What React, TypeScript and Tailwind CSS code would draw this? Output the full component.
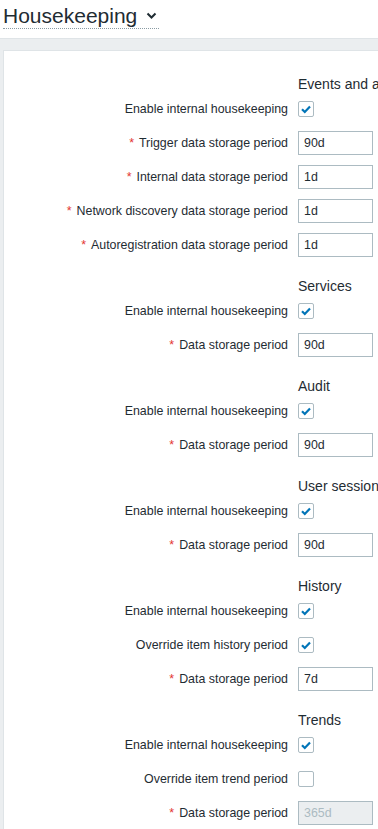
import React from "react";

type Row =
  | { kind: "check"; label: string; checked: boolean }
  | { kind: "input"; label: string; value: string; required?: boolean; disabled?: boolean };

type Section = { title: string; rows: Row[] };

const sections: Section[] = [
  {
    title: "Events and alerts",
    rows: [
      { kind: "check", label: "Enable internal housekeeping", checked: true },
      { kind: "input", label: "Trigger data storage period", value: "90d", required: true },
      { kind: "input", label: "Internal data storage period", value: "1d", required: true },
      { kind: "input", label: "Network discovery data storage period", value: "1d", required: true },
      { kind: "input", label: "Autoregistration data storage period", value: "1d", required: true },
    ],
  },
  {
    title: "Services",
    rows: [
      { kind: "check", label: "Enable internal housekeeping", checked: true },
      { kind: "input", label: "Data storage period", value: "90d", required: true },
    ],
  },
  {
    title: "Audit",
    rows: [
      { kind: "check", label: "Enable internal housekeeping", checked: true },
      { kind: "input", label: "Data storage period", value: "90d", required: true },
    ],
  },
  {
    title: "User sessions",
    rows: [
      { kind: "check", label: "Enable internal housekeeping", checked: true },
      { kind: "input", label: "Data storage period", value: "90d", required: true },
    ],
  },
  {
    title: "History",
    rows: [
      { kind: "check", label: "Enable internal housekeeping", checked: true },
      { kind: "check", label: "Override item history period", checked: true },
      { kind: "input", label: "Data storage period", value: "7d", required: true },
    ],
  },
  {
    title: "Trends",
    rows: [
      { kind: "check", label: "Enable internal housekeeping", checked: true },
      { kind: "check", label: "Override item trend period", checked: false },
      { kind: "input", label: "Data storage period", value: "365d", required: true, disabled: true },
    ],
  },
];

const CheckBox = ({ checked }: { checked: boolean }) => (
  <div className="w-4 h-4 border border-[#acbbc2] bg-white rounded-[2px] flex items-center justify-center">
    {checked && (
      <svg width="12" height="12" viewBox="0 0 12 12">
        <path d="M2 6.2 L4.8 9 L10 3.5" fill="none" stroke="#0275b8" strokeWidth="2.2" />
      </svg>
    )}
  </div>
);

const FormRow = ({ row }: { row: Row }) => (
  <div className="grid grid-cols-[284px_1fr] gap-x-[10px] h-6 items-center">
    <label className="text-right whitespace-nowrap">
      {row.kind === "input" && row.required && <span className="text-[#e33734] mr-[5px]">*</span>}
      {row.label}
    </label>
    <div>
      {row.kind === "check" ? (
        <CheckBox checked={row.checked} />
      ) : (
        <div
          className={`w-[75px] h-6 border border-[#acbbc2] pl-[5px] leading-[22px] ${
            row.disabled ? "bg-[#ebeef0] text-[#acbbc2]" : "bg-white text-[#1f2c33]"
          }`}
        >
          {row.value}
        </div>
      )}
    </div>
  </div>
);

export default function App() {
  return (
    <div
      className="w-[378px] h-[829px] overflow-hidden bg-[#ebeef0] text-[#1f2c33]"
      style={{ fontFamily: '"Liberation Sans", Arial, sans-serif' }}
    >
      {/* header */}
      <header className="h-[39px] bg-white border-b border-[#dfe4e7] px-[3px] pt-[4px]">
        <div className="inline-flex items-center gap-[9px] border-b border-dotted border-[#8a9ba3] pr-[2px] h-[25px]">
          <h1 className="text-[21px] leading-[24px]">Housekeeping</h1>
          <svg width="11" height="8" viewBox="0 0 11 8">
            <path d="M1.5 1.5 L5.5 5.5 L9.5 1.5" fill="none" stroke="#1f2c33" strokeWidth="2" />
          </svg>
        </div>
      </header>
      {/* form */}
      <div className="ml-[3px] mt-[11px] w-[420px] h-[800px] bg-white border-l border-t border-[#dfe4e7] pt-[24px] text-[12.4px]">
        <div className="flex flex-col gap-5">
          {sections.map((s) => (
            <div key={s.title} className="flex flex-col">
              <div className="grid grid-cols-[284px_1fr] gap-x-[10px] mb-[4px]">
                <div />
                <div className="text-[14px] leading-[18px] whitespace-nowrap">{s.title}</div>
              </div>
              <div className="flex flex-col gap-[10px]">
                {s.rows.map((r, i) => (
                  <FormRow key={i} row={r} />
                ))}
              </div>
            </div>
          ))}
        </div>
      </div>
    </div>
  );
}
